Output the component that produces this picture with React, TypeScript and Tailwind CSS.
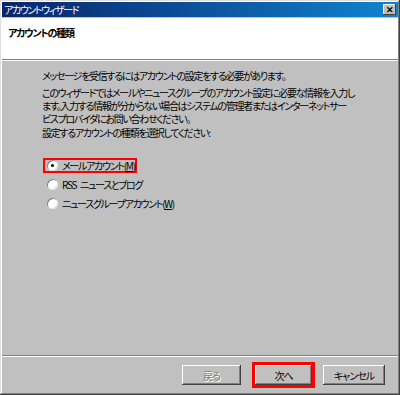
import React from "react";

const jp = "font-['MS_UI_Gothic','Noto_Sans_CJK_JP',sans-serif] [font-feature-settings:'palt']";

function Radio({ checked }: { checked?: boolean }) {
  return (
    <span className="relative inline-block w-[11px] h-[11px] rounded-full bg-white shadow-[inset_1px_1px_#808080,inset_-1px_-1px_#dfdfdf] shrink-0">
      {checked && (
        <span className="absolute left-[4px] top-[4px] w-[3px] h-[3px] rounded-full bg-black" />
      )}
    </span>
  );
}

function Btn({ label, disabled, w = "w-[59px]" }: { label: string; disabled?: boolean; w?: string }) {
  return (
    <div
      className={
        w +
        " h-[20px] flex items-center justify-center bg-[#c0c0c0] text-[10px] tracking-[-1px] shadow-[inset_-1px_-1px_#404040,inset_1px_1px_#ffffff,inset_-2px_-2px_#808080] " +
        (disabled ? "text-[#808080] [text-shadow:1px_1px_#ffffff]" : "text-black")
      }
    >
      {label}
    </div>
  );
}

export default function App() {
  return (
    <div className={"w-[400px] h-[395px] bg-[#c0c0c0] flex flex-col p-[2px] shadow-[inset_-1px_-1px_#404040,inset_1px_1px_#dfdfdf,inset_-2px_-2px_#808080,inset_2px_2px_#ffffff] " + jp}>
      {/* title bar */}
      <div className="h-[15px] flex items-center justify-between bg-gradient-to-r from-[#0a246a] to-[#1084d0] pl-[2px] pr-[2px]">
        <span className="text-white text-[10px] leading-none tracking-[-1.4px]">アカウントウィザード</span>
        <div className="w-[13px] h-[11px] bg-[#c0c0c0] flex items-center justify-center shadow-[inset_-1px_-1px_#404040,inset_1px_1px_#ffffff] text-[9px] leading-none font-bold text-black">
          ✕
        </div>
      </div>

      {/* header */}
      <div className="h-[42px] bg-white border-b border-b-[#808080] pl-[6px] pt-[8px] mt-px">
        <p className="text-[10px] font-bold text-black leading-[14px] tracking-[-1.2px]">アカウントの種類</p>
      </div>
      <div className="h-px bg-white" />

      {/* body */}
      <div className="flex-1 flex flex-col pl-[40px] pt-[8px] text-[10px] leading-[13px] tracking-[-1.3px] text-black">
        <p className="whitespace-nowrap">メッセージを受信するにはアカウントの設定をする必要があります。</p>
        <p className="mt-[4px] whitespace-nowrap">
          このウィザードではメールやニュースグループのアカウント設定に必要な情報を入力し<br />
          ます。入力する情報が分からない場合はシステムの管理者またはインターネットサー<br />
          ビスプロバイダにお問い合わせください。
        </p>
        <p className="mt-px whitespace-nowrap">設定するアカウントの種類を選択してください:</p>

        <div className="mt-[19px] flex flex-col gap-[4px] ml-[1px]">
          <div className="w-[94px] h-[15px] border-2 border-[#ff0000] flex items-center gap-[4px] pl-[2px]">
            <Radio checked />
            <span className="whitespace-nowrap">メールアカウント(<u>M</u>)</span>
          </div>
          <div className="h-[15px] flex items-center gap-[4px] pl-[4px]">
            <Radio />
            <span className="whitespace-nowrap">
              <span className="mr-[4px]">RSS</span>ニュースとブログ
            </span>
          </div>
          <div className="h-[15px] flex items-center gap-[4px] pl-[4px]">
            <Radio />
            <span className="whitespace-nowrap">ニュースグループアカウント(<u>W</u>)</span>
          </div>
        </div>
      </div>

      {/* footer */}
      <div className="h-px bg-[#808080]" />
      <div className="h-px bg-white" />
      <div className="h-[36px] flex items-center justify-end pr-[13px]">
        <Btn label="戻る" disabled />
        <div className="ml-[11px] border-[3px] border-[#ff0000]">
          <Btn label="次へ" w="w-[57px]" />
        </div>
        <div className="ml-[8px]">
          <Btn label="キャンセル" w="w-[62px]" />
        </div>
      </div>
    </div>
  );
}
